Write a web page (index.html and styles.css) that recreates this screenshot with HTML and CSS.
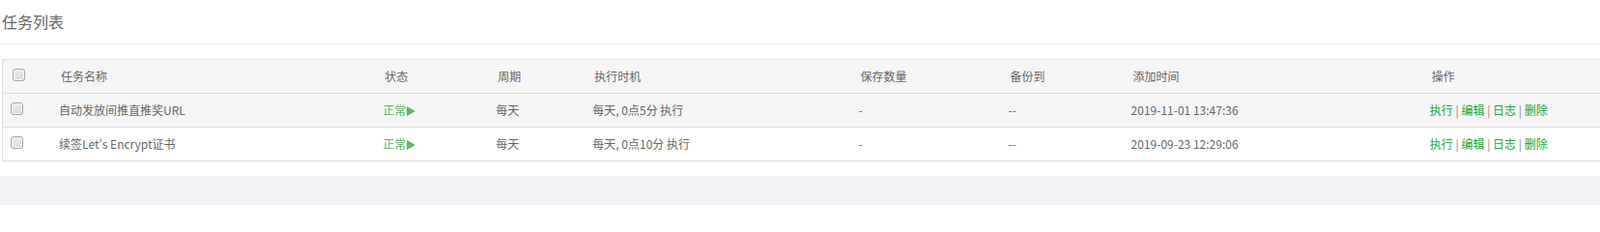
FILE: index.html
```html
<!DOCTYPE html>
<html lang="zh-CN">
<head>
<meta charset="utf-8">
<title>任务列表</title>
<link rel="stylesheet" href="styles.css">
</head>
<body>
<div class="page">
  <div class="title">任务列表</div>
  <div class="table-wrap">
    <table class="tasks">
      <colgroup>
        <col class="c-check"><col class="c-name"><col class="c-status"><col class="c-period"><col class="c-exec"><col class="c-save"><col class="c-backup"><col class="c-time"><col class="c-ops">
      </colgroup>
      <thead>
        <tr>
          <th><input type="checkbox" class="cb"></th>
          <th>任务名称</th>
          <th>状态</th>
          <th>周期</th>
          <th>执行时机</th>
          <th>保存数量</th>
          <th>备份到</th>
          <th>添加时间</th>
          <th>操作</th>
        </tr>
      </thead>
      <tbody>
        <tr class="hover">
          <td><input type="checkbox" class="cb"></td>
          <td>自动发放间推直推奖URL</td>
          <td><span class="status">正常<svg class="play" width="9" height="10" viewBox="0 0 9 10"><path d="M0 0 L9 5 L0 10 Z"/></svg></span></td>
          <td>每天</td>
          <td>每天, 0点5分 执行</td>
          <td>-</td>
          <td>--</td>
          <td class="num">2019-11-01 13:47:36</td>
          <td class="ops"><a>执行</a> | <a>编辑</a> | <a>日志</a> | <a>删除</a></td>
        </tr>
        <tr>
          <td><input type="checkbox" class="cb"></td>
          <td>续签Let's Encrypt证书</td>
          <td><span class="status">正常<svg class="play" width="9" height="10" viewBox="0 0 9 10"><path d="M0 0 L9 5 L0 10 Z"/></svg></span></td>
          <td>每天</td>
          <td>每天, 0点10分 执行</td>
          <td>-</td>
          <td>--</td>
          <td class="num">2019-09-23 12:29:06</td>
          <td class="ops"><a>执行</a> | <a>编辑</a> | <a>日志</a> | <a>删除</a></td>
        </tr>
      </tbody>
    </table>
  </div>
  <div class="footer-strip"></div>
</div>
</body>
</html>
```

FILE: styles.css
```css
html, body {
  margin: 0;
  padding: 0;
  background: #fff;
}
body {
  font-family: "Noto Sans CJK SC", "Noto Sans", sans-serif;
  font-size: 12px;
  color: #666;
  overflow: hidden;
  width: 1656px;
  height: 216px;
}
.page {
  width: 1656px;
  overflow: hidden;
}
.title {
  height: 45px;
  line-height: 45px;
  font-size: 16px;
  color: #666;
  padding-left: 2px;
  border-bottom: 1px solid #eaeaea;
}
.table-wrap {
  margin-top: 15px;
  padding-left: 2px;
  width: 1700px;
}
.tasks {
  border-collapse: separate;
  border-spacing: 0;
  table-layout: fixed;
  width: 1670px;
  border-top: 1px solid #ddd;
  border-left: 1px solid #ddd;
}
.c-check { width: 50px; }
.c-name { width: 335px; }
.c-status { width: 117px; }
.c-period { width: 100px; }
.c-exec { width: 275px; }
.c-save { width: 155px; }
.c-backup { width: 127px; }
.c-time { width: 309px; }
.c-ops { width: 200px; }
.tasks th, .tasks td {
  height: 34px;
  padding: 0 0 0 8px;
  text-align: left;
  font-weight: normal;
  border-bottom: 1px solid #ddd;
  white-space: nowrap;
  vertical-align: middle;
  line-height: 18px;
}
.tasks th {
  padding-left: 10px;
  background: #f5f5f5;
  color: #666;
}
.tasks tr.hover td {
  background: #f5f5f5;
}
.cb {
  -webkit-appearance: none;
  appearance: none;
  width: 13px;
  height: 13px;
  margin: 0;
  border: 1px solid #a4a4a4;
  border-radius: 3px;
  background: linear-gradient(#ececec, #dcdcdc);
  box-shadow: inset 0 0 0 1px #f4f4f4;
  vertical-align: middle;
  position: relative;
  top: -3px;
  box-sizing: border-box;
}
.status {
  color: #5cb85c;
}
.play {
  fill: #5cb85c;
  vertical-align: -1px;
  margin-left: 1px;
}
.num {
  letter-spacing: 0;
}
.ops a {
  color: #20a53a;
  text-decoration: none;
}
.ops {
  color: #888;
}
.footer-strip {
  margin-top: 15px;
  height: 30px;
  background: #f0f1f5;
}
```
